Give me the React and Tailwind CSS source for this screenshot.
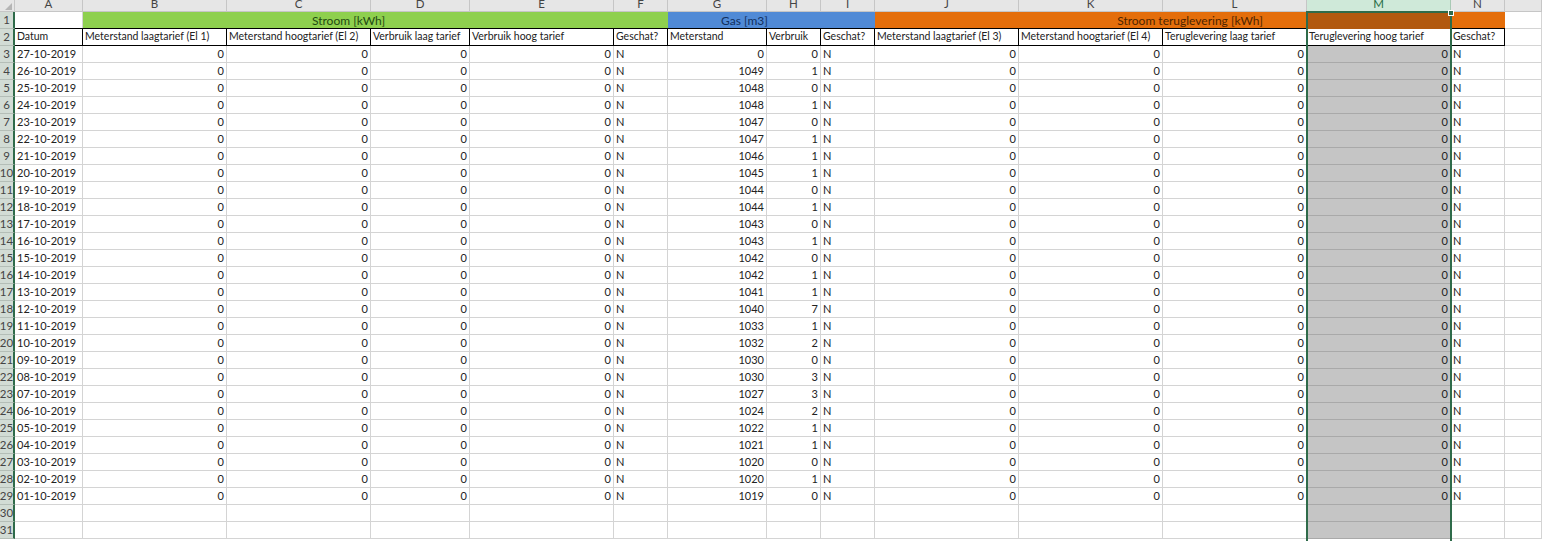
import clsx from "clsx";

const dates = [
  "27-10-2019", "26-10-2019", "25-10-2019", "24-10-2019", "23-10-2019", "22-10-2019", "21-10-2019",
  "20-10-2019", "19-10-2019", "18-10-2019", "17-10-2019", "16-10-2019", "15-10-2019", "14-10-2019",
  "13-10-2019", "12-10-2019", "11-10-2019", "10-10-2019", "09-10-2019", "08-10-2019", "07-10-2019",
  "06-10-2019", "05-10-2019", "04-10-2019", "03-10-2019", "02-10-2019", "01-10-2019",
];
const gas = [
  [0, 0], [1049, 1], [1048, 0], [1048, 1], [1047, 0], [1047, 1], [1046, 1], [1045, 1], [1044, 0],
  [1044, 1], [1043, 0], [1043, 1], [1042, 0], [1042, 1], [1041, 1], [1040, 7], [1033, 1], [1032, 2],
  [1030, 0], [1030, 3], [1027, 3], [1024, 2], [1022, 1], [1021, 1], [1020, 0], [1020, 1], [1019, 0],
];
const letters = ["A", "B", "C", "D", "E", "F", "G", "H", "I", "J", "K", "L", "M", "N"];
const headers = [
  "Datum", "Meterstand laagtarief (El 1)", "Meterstand hoogtarief (El 2)", "Verbruik laag tarief",
  "Verbruik hoog tarief", "Geschat?", "Meterstand", "Verbruik", "Geschat?",
  "Meterstand laagtarief (El 3)", "Meterstand hoogtarief (El 4)", "Teruglevering laag tarief",
  "Teruglevering hoog tarief", "Geschat?",
];

function ColHead({ children, active }) {
  return (
    <div
      className={clsx(
        "flex justify-center items-end overflow-hidden border-r border-b text-[11.5px] leading-[14px]",
        active ? "bg-[#cfe9d9] border-[#a9c9b5] text-[#1f6b43]" : "bg-[#e6e6e6] border-[#c6c6c6] text-[#444]"
      )}
    >
      {children}
    </div>
  );
}

function RowHead({ n }) {
  return (
    <div className="flex items-center justify-center overflow-hidden bg-[#d2dcd5] border-r-2 border-r-[#2f6b4a] border-b border-b-[#b4beb7] text-[11.5px] text-[#444]">
      {n}
    </div>
  );
}

function Cell({ children, right, selected }) {
  return (
    <div
      className={clsx(
        "flex items-center overflow-hidden whitespace-nowrap border-r border-b px-[2px]",
        right && "justify-end",
        selected ? "bg-[#c5c5c5] border-[#a9a9a9]" : "border-[#d4d4d4]"
      )}
    >
      {children}
    </div>
  );
}

function App() {
  const rows = [];
  for (let i = 0; i < 29; i++) {
    const n = i + 3;
    const hasData = i < dates.length;
    const zero = hasData ? 0 : "";
    const flag = hasData ? "N" : "";
    const values = [
      [hasData ? dates[i] : "", false],
      [zero, true], [zero, true], [zero, true], [zero, true], [flag, false],
      [hasData ? gas[i][0] : "", true], [hasData ? gas[i][1] : "", true], [flag, false],
      [zero, true], [zero, true], [zero, true], [zero, true], [flag, false],
    ];
    rows.push(<RowHead key={"h" + n} n={n} />);
    values.forEach(([v, right], c) => {
      rows.push(
        <Cell key={n + "-" + c} right={right} selected={c === 12}>
          {v}
        </Cell>
      );
    });
    rows.push(<Cell key={n + "-o"} />);
  }

  return (
    <div className="relative w-[1542px] h-[541px] overflow-hidden bg-white font-['Lato',sans-serif] text-[11px] text-[#222]">
      <div className="grid grid-cols-[15px_68px_144px_144px_99px_144px_54px_99px_54px_54px_144px_144px_144px_144px_54px_37px] grid-rows-[12px] auto-rows-[17px]">
        {/* kolomkoppen */}
        <div className="relative bg-[#e6e6e6] border-r border-b border-[#c6c6c6]">
          <div className="absolute right-[2px] bottom-[1px] w-0 h-0 border-l-[7px] border-l-transparent border-b-[7px] border-b-[#b5b5b5]" />
        </div>
        {letters.map((l) => (
          <ColHead key={l} active={l === "M"}>{l}</ColHead>
        ))}
        <ColHead />

        {/* rij 1 */}
        <RowHead n={1} />
        <div className="border-r border-b border-b-black border-r-[#d4d4d4]" />
        <div className="col-span-4 flex items-center justify-center bg-[#8ed04e] text-[12px] text-[#1f4a12]">Stroom [kWh]</div>
        <div className="bg-[#8ed04e]" />
        <div className="col-span-2 flex items-center justify-center bg-[#508ad6] text-[12px] text-[#12305e]">Gas [m3]</div>
        <div className="bg-[#508ad6]" />
        <div className="col-span-5 flex items-center justify-center bg-[#e46e0b] text-[12px] text-[#4f2500]">Stroom teruglevering [kWh]</div>
        <div className="border-r border-b border-[#d4d4d4]" />

        {/* rij 2 */}
        <RowHead n={2} />
        {headers.map((h, i) => (
          <div
            key={i}
            className="flex items-center overflow-hidden whitespace-nowrap border-r border-y border-black px-[2px] text-[10.5px] -mt-px h-[18px]"
          >
            {h}
          </div>
        ))}
        <div className="border-r border-b border-[#d4d4d4]" />

        {rows}
      </div>

      {/* selectie kolom M */}
      <div className="absolute left-[1306px] top-[12px] w-[145px] h-[17px] bg-[#b2590f]" />
      <div className="absolute left-[1306px] top-[11px] w-[146px] bottom-0 border-x-2 border-t-2 border-[#2f6b4a]" />
      <div className="absolute left-[1448px] top-[10px] w-[6px] h-[6px] bg-[#2f6b4a] border border-white" />
    </div>
  );
}

export default App;
